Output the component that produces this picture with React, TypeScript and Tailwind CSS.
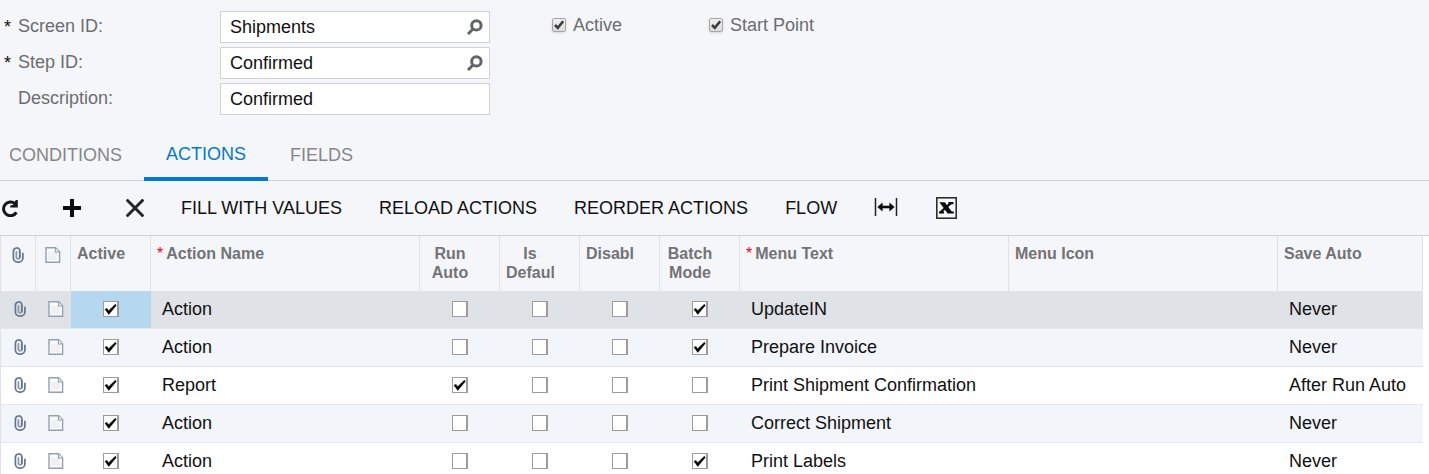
import { useState } from 'react';
import type { ReactNode } from 'react';
import { clsx } from 'clsx';

interface ActionRow {
  id: number;
  active: boolean;
  name: string;
  runAuto: boolean;
  isDefault: boolean;
  disabled: boolean;
  batchMode: boolean;
  menuText: string;
  menuIcon: string;
  saveAuto: string;
}

const initialRows: ActionRow[] = [
  { id: 1, active: true, name: 'Action', runAuto: false, isDefault: false, disabled: false, batchMode: true, menuText: 'UpdateIN', menuIcon: '', saveAuto: 'Never' },
  { id: 2, active: true, name: 'Action', runAuto: false, isDefault: false, disabled: false, batchMode: true, menuText: 'Prepare Invoice', menuIcon: '', saveAuto: 'Never' },
  { id: 3, active: true, name: 'Report', runAuto: true, isDefault: false, disabled: false, batchMode: false, menuText: 'Print Shipment Confirmation', menuIcon: '', saveAuto: 'After Run Auto' },
  { id: 4, active: true, name: 'Action', runAuto: false, isDefault: false, disabled: false, batchMode: false, menuText: 'Correct Shipment', menuIcon: '', saveAuto: 'Never' },
  { id: 5, active: true, name: 'Action', runAuto: false, isDefault: false, disabled: false, batchMode: true, menuText: 'Print Labels', menuIcon: '', saveAuto: 'Never' },
];

const tabs = ['CONDITIONS', 'ACTIONS', 'FIELDS'];

function SearchIcon() {
  return (
    <svg className="w-4 h-4" viewBox="0 0 16 16" fill="none" stroke="#636466">
      <circle cx="9.4" cy="6.4" r="4.7" strokeWidth="3" />
      <path d="M6 10 L1 15" strokeWidth="3" />
    </svg>
  );
}

function RefreshIcon() {
  return (
    <svg className="w-[18px] h-[18px]" viewBox="0 0 18 18" fill="none">
      <path d="M15 4.6 A6.9 6.9 0 1 0 16.4 13.4" stroke="#151515" strokeWidth="3" />
      <path d="M17.8 1 V8.4 H10.2 V6.4 L13 6 L15.8 1 Z" fill="#151515" />
    </svg>
  );
}

function PlusIcon() {
  return (
    <svg className="w-[18px] h-[18px]" viewBox="0 0 18 18">
      <path d="M7 0h4v7h7v4h-7v7H7v-7H0V7h7z" fill="#0a0a0a" />
    </svg>
  );
}

function DeleteIcon() {
  return (
    <svg className="w-[18px] h-[18px]" viewBox="0 0 18 18" fill="none" stroke="#262626" strokeWidth="3">
      <path d="M0.6 0.6 L17.4 17.4 M17.4 0.6 L0.6 17.4" />
    </svg>
  );
}

function FitWidthIcon() {
  return (
    <svg className="w-6 h-5" viewBox="0 0 24 20" fill="none">
      <path d="M1.5 0v18M22.5 0v18" stroke="#222" strokeWidth="1.5" />
      <path d="M7 9h10" stroke="#0a0a0a" strokeWidth="2.6" />
      <path d="M3.4 9 L8.6 4.6 V13.4 Z M20.6 9 L15.4 4.6 V13.4 Z" fill="#0a0a0a" />
    </svg>
  );
}

function ExcelIcon() {
  return (
    <svg className="w-[21px] h-[22px]" viewBox="0 0 21 22" fill="none">
      <rect x="0.8" y="0.8" width="19.4" height="20.4" stroke="#222" strokeWidth="1.5" />
      <path d="M3.4 5.2h5.4l7.8 10.6h-5.4z" fill="#0a0a0a" />
      <path d="M15.4 5.6 L4.4 15.4" stroke="#0a0a0a" strokeWidth="2.2" />
      <path d="M12.4 5h5v2.2h-5zM3 14.4h5v2.2H3zM11.4 14.4h6.4v2.2h-6.4z" fill="#0a0a0a" />
    </svg>
  );
}

function ClipIcon() {
  return (
    <svg className="w-3 h-4" viewBox="0 0 12 16" fill="none" strokeLinecap="round">
      <path d="M4.4 5V10.6a1.8 1.8 0 0 0 3.4 0V4.4" stroke="#8e9aab" strokeWidth="1.8" />
      <path d="M7.8 10.6V3.6A2.7 2.7 0 0 0 4.6 1 3.4 3.4 0 0 0 1.4 4.4V11a4.3 4.3 0 0 0 4.3 4.1h.8A4.3 4.3 0 0 0 10.9 11V6.4" stroke="#66758b" strokeWidth="1.7" />
    </svg>
  );
}

function NoteIcon() {
  return (
    <svg className="w-4 h-4" viewBox="0 0 16 16">
      <path d="M1 0.8h9.6l4 4v10.4H1z" fill="#fbfcfd" stroke="#94a0b1" strokeWidth="1.4" />
      <path d="M3 5h9v8H3z" fill="#eef0f4" />
      <path d="M10.4 1v4h4.2" fill="#e8ecf1" stroke="#94a0b1" strokeWidth="1.1" />
    </svg>
  );
}

function GridCheck({ checked, label, onChange }: { checked: boolean; label: string; onChange: () => void }) {
  return (
    <span className="relative block mx-auto w-4 h-4">
      <input
        type="checkbox"
        aria-label={label}
        checked={checked}
        onChange={onChange}
        className="block appearance-none w-4 h-4 bg-white border border-r-2 border-[#9c9c9c]"
      />
      {checked && (
        <svg className="absolute inset-0 w-4 h-4 pointer-events-none" viewBox="0 0 16 16">
          <path d="M2 8.2 L4 7.4 L5.6 9.8 L12.4 3.2 L13.2 4.6 L5.8 13.4 Z" fill="#000" stroke="#000" strokeWidth="0.5" />
        </svg>
      )}
    </span>
  );
}

function FormCheck({ id, label }: { id: string; label: string }) {
  const [checked, setChecked] = useState(true);
  return (
    <div className="flex items-center gap-[7px] h-7">
      <span className="relative block w-[14px] h-[14px]">
        <input
          id={id}
          type="checkbox"
          checked={checked}
          onChange={() => setChecked(!checked)}
          className="block appearance-none w-[14px] h-[14px] rounded-[2px] border border-[#a6a6a6] bg-linear-to-b from-[#efefef] to-[#dcdcdc] shadow-sm"
        />
        {checked && (
          <svg className="absolute inset-0 w-[14px] h-[14px] pointer-events-none" viewBox="0 0 14 14" fill="none">
            <path d="M3 7 L5.8 9.8 L11.2 3.2" stroke="#3c3c3c" strokeWidth="2.6" />
          </svg>
        )}
      </span>
      <label htmlFor={id} className="text-[#6b6d70]">{label}</label>
    </div>
  );
}

interface FieldProps {
  id: string;
  label: string;
  value: string;
  required?: boolean;
  lookup?: boolean;
}

function Field({ id, label, value, required, lookup }: FieldProps) {
  return (
    <div className="flex items-center h-8">
      <span className="w-[18px] pl-1">{required && '*'}</span>
      <label htmlFor={id} className="w-[202px] pb-[2px] text-[#6b6d70]">{label}</label>
      <div className="flex items-center w-[270px] h-8 pl-[9px] pr-[6px] bg-white border border-[#d0d2d6]">
        <input id={id} defaultValue={value} className="flex-1 min-w-0 bg-transparent outline-none" />
        {lookup && (
          <button type="button" aria-label={`Find ${label}`}>
            <SearchIcon />
          </button>
        )}
      </div>
    </div>
  );
}

function HeadCell({ children, required, center }: { children?: ReactNode; required?: boolean; center?: boolean }) {
  return (
    <th scope="col" className="h-[55px] p-0 pt-2 align-top border-r border-[#dfe1e5] bg-[#f5f6f9]">
      <div className={clsx('overflow-hidden ml-[6px]', center ? 'mr-[25px] text-center' : 'text-left')}>
        {required && <span className="mr-[3px] font-normal text-[#ff0000]">*</span>}
        {children}
      </div>
    </th>
  );
}

export default function App() {
  const [rows, setRows] = useState(initialRows);
  const [tab, setTab] = useState('ACTIONS');
  const [selected, setSelected] = useState(1);

  const toggle = (id: number, key: 'active' | 'runAuto' | 'isDefault' | 'disabled' | 'batchMode') =>
    setRows(rows.map((r) => (r.id === id ? { ...r, [key]: !r[key] } : r)));

  return (
    <div className="h-screen overflow-hidden bg-white font-['Liberation_Sans',Arial,sans-serif] text-[18px] leading-6 text-[#111]">
      <div className="bg-[#f5f6f9]">
        <form className="flex pt-[11px] pb-[14px]">
          <div className="flex flex-col gap-1">
            <Field id="screen" label="Screen ID:" value="Shipments" required lookup />
            <Field id="step" label="Step ID:" value="Confirmed" required lookup />
            <Field id="description" label="Description:" value="Confirmed" />
          </div>
          <div className="flex items-start gap-[87px] ml-[62px]">
            <FormCheck id="active" label="Active" />
            <FormCheck id="start" label="Start Point" />
          </div>
        </form>

        <nav role="tablist" className="flex border-b border-[#cfd1d5]">
          {tabs.map((name) => (
            <button
              key={name}
              type="button"
              role="tab"
              aria-selected={tab === name}
              onClick={() => setTab(name)}
              className={clsx(
                'h-[52px] -mb-px px-[22px] border-b-4 first:pl-[9px]',
                tab === name ? 'pt-[2px] border-[#007acf] text-[#007acf]' : 'pt-1 border-transparent text-[#858688]',
              )}
            >
              {name}
            </button>
          ))}
        </nav>

        <div role="toolbar" className="flex items-center gap-[37px] h-[55px] border-b border-[#cfd1d5] whitespace-nowrap">
          <div className="flex items-center gap-[45px]">
            <button type="button" aria-label="Refresh"><RefreshIcon /></button>
            <button type="button" aria-label="Add row"><PlusIcon /></button>
            <button type="button" aria-label="Delete row"><DeleteIcon /></button>
          </div>
          <button type="button">FILL WITH VALUES</button>
          <button type="button">RELOAD ACTIONS</button>
          <button type="button">REORDER ACTIONS</button>
          <button type="button">FLOW</button>
          <div className="flex items-center gap-[38px]">
            <button type="button" aria-label="Fit to screen"><FitWidthIcon /></button>
            <button type="button" aria-label="Export to Excel"><ExcelIcon /></button>
          </div>
        </div>
      </div>

      <div className="pr-[6px]">
        <table className="w-full table-fixed border-separate border-spacing-0 border-l border-[#dfe1e5]">
          <colgroup>
            <col className="w-[35px]" />
            <col className="w-[35px]" />
            <col className="w-20" />
            <col />
            <col className="w-20" />
            <col className="w-20" />
            <col className="w-20" />
            <col className="w-20" />
            <col />
            <col />
            <col className="w-[145px]" />
          </colgroup>
          <thead className="text-base leading-[19px] font-bold text-[#727376]">
            <tr>
              <th scope="col" aria-label="Files" className="p-0 pt-[11px] align-top border-r border-[#dfe1e5] bg-[#f5f6f9]">
                <span className="flex justify-center"><ClipIcon /></span>
              </th>
              <th scope="col" aria-label="Notes" className="p-0 pt-[11px] align-top border-r border-[#dfe1e5] bg-[#f5f6f9]">
                <span className="flex justify-center"><NoteIcon /></span>
              </th>
              <HeadCell>Active</HeadCell>
              <HeadCell required>Action Name</HeadCell>
              <HeadCell center>Run Auto</HeadCell>
              <HeadCell center>Is Default</HeadCell>
              <HeadCell center>Disabled</HeadCell>
              <HeadCell center>Batch Mode</HeadCell>
              <HeadCell required>Menu Text</HeadCell>
              <HeadCell>Menu Icon</HeadCell>
              <HeadCell>Save Auto</HeadCell>
            </tr>
          </thead>
          <tbody>
            {rows.map((row) => (
              <tr
                key={row.id}
                onClick={() => setSelected(row.id)}
                className={clsx(
                  'h-[38px] *:p-0 *:pb-[2px] *:border-b *:border-[#e3e6ea]',
                  row.id === selected ? 'bg-[#dfe2e7]' : 'odd:bg-white even:bg-[#f2f5fa]',
                )}
              >
                <td><span className="flex justify-center pl-[3px]"><ClipIcon /></span></td>
                <td><span className="flex justify-center pl-1"><NoteIcon /></span></td>
                <td className={clsx(row.id === selected && 'bg-[#b5d7f0]')}>
                  <GridCheck label="Active" checked={row.active} onChange={() => toggle(row.id, 'active')} />
                </td>
                <td><div className="pl-[11px] truncate">{row.name}</div></td>
                <td><GridCheck label="Run Auto" checked={row.runAuto} onChange={() => toggle(row.id, 'runAuto')} /></td>
                <td><GridCheck label="Is Default" checked={row.isDefault} onChange={() => toggle(row.id, 'isDefault')} /></td>
                <td><GridCheck label="Disabled" checked={row.disabled} onChange={() => toggle(row.id, 'disabled')} /></td>
                <td><GridCheck label="Batch Mode" checked={row.batchMode} onChange={() => toggle(row.id, 'batchMode')} /></td>
                <td><div className="pl-[11px] truncate">{row.menuText}</div></td>
                <td><div className="pl-[11px] truncate">{row.menuIcon}</div></td>
                <td><div className="pl-[11px] truncate">{row.saveAuto}</div></td>
              </tr>
            ))}
          </tbody>
        </table>
      </div>
    </div>
  );
}
